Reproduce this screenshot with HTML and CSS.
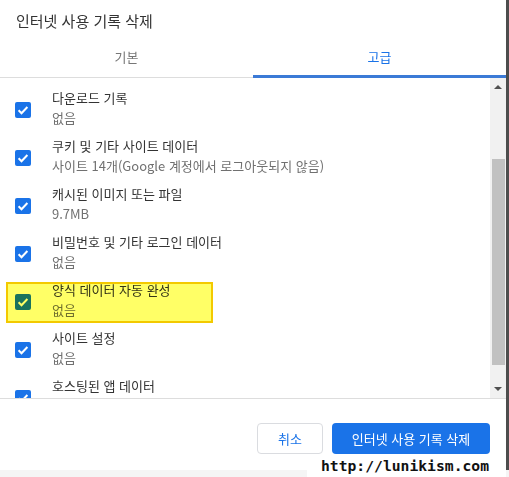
FILE: index.html
```html
<!DOCTYPE html>
<html lang="ko">

    <head>
        <meta charset="UTF-8">
        <meta name="viewport" content="width=device-width, initial-scale=1.0">
        <title>인터넷 사용 기록 삭제</title>

        <link rel="stylesheet" href="styles.css">
    </head>

    <body>
        <div class="dialog">
            <h1 class="title">인터넷 사용 기록 삭제</h1>

            <div class="tabs">
                <div class="tab">기본</div>
                <div class="tab active">고급</div>
            </div>

            <div class="scroller">
                <ul class="list">
                    <li class="row">
                        <span class="check"><svg viewBox="0 0 16 16"><path d="M3.6 8.3l2.9 2.9 5.9-6.2"/></svg></span>
                        <div class="text"><div class="label">다운로드 기록</div><div class="sub">없음</div></div>
                    </li>
                    <li class="row">
                        <span class="check"><svg viewBox="0 0 16 16"><path d="M3.6 8.3l2.9 2.9 5.9-6.2"/></svg></span>
                        <div class="text"><div class="label">쿠키 및 기타 사이트 데이터</div><div class="sub">사이트 14개(Google 계정에서 로그아웃되지 않음)</div></div>
                    </li>
                    <li class="row">
                        <span class="check"><svg viewBox="0 0 16 16"><path d="M3.6 8.3l2.9 2.9 5.9-6.2"/></svg></span>
                        <div class="text"><div class="label">캐시된 이미지 또는 파일</div><div class="sub">9.7MB</div></div>
                    </li>
                    <li class="row">
                        <span class="check"><svg viewBox="0 0 16 16"><path d="M3.6 8.3l2.9 2.9 5.9-6.2"/></svg></span>
                        <div class="text"><div class="label">비밀번호 및 기타 로그인 데이터</div><div class="sub">없음</div></div>
                    </li>
                    <li class="row">
                        <span class="check"><svg viewBox="0 0 16 16"><path d="M3.6 8.3l2.9 2.9 5.9-6.2"/></svg></span>
                        <div class="text"><div class="label">양식 데이터 자동 완성</div><div class="sub">없음</div></div>
                        <span class="marker"></span>
                    </li>
                    <li class="row">
                        <span class="check"><svg viewBox="0 0 16 16"><path d="M3.6 8.3l2.9 2.9 5.9-6.2"/></svg></span>
                        <div class="text"><div class="label">사이트 설정</div><div class="sub">없음</div></div>
                    </li>
                    <li class="row">
                        <span class="check"><svg viewBox="0 0 16 16"><path d="M3.6 8.3l2.9 2.9 5.9-6.2"/></svg></span>
                        <div class="text"><div class="label">호스팅된 앱 데이터</div><div class="sub">없음</div></div>
                    </li>
                </ul>

                <div class="scrollbar">
                    <span class="arrow up"></span>
                    <span class="thumb"></span>
                    <span class="arrow down"></span>
                </div>
            </div>

            <div class="actions">
                <button class="btn cancel">취소</button>
                <button class="btn primary">인터넷 사용 기록 삭제</button>
            </div>
        </div>

        <div class="watermark">http://lunikism.com</div>
    </body>

</html>
```

FILE: styles.css
```css
* {
    box-sizing: border-box;
}

body,
html {
    margin: 0;
    padding: 0;
    width: 509px;
    height: 477px;
    overflow: hidden;
    background-color: #f5f5f5;
    font-family: "Noto Sans CJK KR", "Noto Sans", sans-serif;
    color: #333;
}

body {
    position: relative;
}

.dialog {
    width: 509px;
    height: 470px;
    background-color: #fff;
    border-right: 3px solid #4d4d4d;
    display: flex;
    flex-direction: column;
}

.title {
    margin: 0;
    height: 40px;
    padding: 10px 16px 0;
    font-size: 15px;
    line-height: 22px;
    font-weight: normal;
    color: #333;
}

.tabs {
    display: flex;
    height: 38px;
}

.tab {
    flex: 1;
    text-align: center;
    padding-top: 8px;
    font-size: 13px;
    line-height: 18px;
    color: #777;
    border-bottom: 1px solid #ddd;
}

.tab.active {
    color: #1a73e8;
    border-bottom: 3px solid #3b7ad6;
}

.scroller {
    display: flex;
    height: 321px;
    border-bottom: 1px solid #ddd;
}

.list {
    flex: 1;
    margin: 0;
    padding: 8px 0 0;
    list-style: none;
    overflow: hidden;
}

.row {
    position: relative;
    display: flex;
    align-items: center;
    height: 48px;
    padding-left: 15px;
    flex-shrink: 0;
}

.check {
    width: 16px;
    height: 16px;
    border-radius: 2px;
    background-color: #1a73e8;
    flex-shrink: 0;
    display: flex;
}

.check svg {
    width: 16px;
    height: 16px;
    fill: none;
    stroke: #fff;
    stroke-width: 2;
}

.text {
    margin-left: 21px;
    margin-top: -4px;
    font-size: 13px;
    line-height: 20px;
}

.label {
    color: #333;
}

.sub {
    color: #707070;
}

/* yellow highlighter box */
.marker {
    position: absolute;
    left: 6px;
    top: 4px;
    width: 207px;
    height: 41px;
    background-color: #ffff66;
    border: 2px solid #f3c900;
    mix-blend-mode: multiply;
}

.scrollbar {
    width: 16px;
    background-color: #f1f1f1;
    display: flex;
    flex-direction: column;
    align-items: center;
}

.arrow {
    width: 0;
    height: 0;
    border-left: 4px solid transparent;
    border-right: 4px solid transparent;
}

.arrow.up {
    margin-top: 7px;
    border-bottom: 4px solid #505050;
}

.arrow.down {
    margin-top: auto;
    margin-bottom: 7px;
    border-top: 4px solid #505050;
}

.thumb {
    width: 13px;
    height: 206px;
    margin-top: 70px;
    margin-left: 1px;
    background-color: #c1c1c1;
}

.actions {
    display: flex;
    justify-content: flex-end;
    gap: 9px;
    padding: 24px 16px 0;
}

.btn {
    height: 31px;
    border-radius: 4px;
    font-family: inherit;
    font-size: 13px;
    padding: 0 16px;
    cursor: pointer;
}

.cancel {
    width: 66px;
    background-color: #fff;
    color: #1a73e8;
    border: 1px solid #dadce0;
}

.primary {
    width: 158px;
    background-color: #1a73e8;
    color: #fff;
    border: none;
}

.watermark {
    position: absolute;
    left: 307px;
    top: 454px;
    width: 199px;
    height: 23px;
    background-color: #fff;
    padding-left: 14px;
    font-family: "DejaVu Sans Mono", monospace;
    font-weight: bold;
    font-size: 14.7px;
    line-height: 23px;
    color: #111;
}
```
